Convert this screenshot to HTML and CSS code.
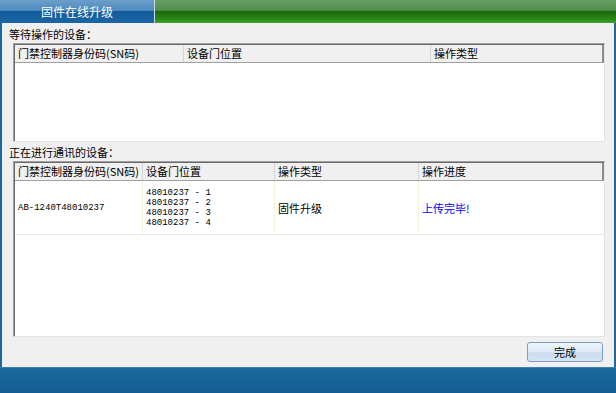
FILE: index.html
```html
<!DOCTYPE html>
<html lang="zh-CN">

<head>
  <meta charset="UTF-8" />
  <title>固件在线升级</title>
  <link rel="stylesheet" href="styles.css">
</head>

<body>
  <div class="window">
    <div class="titlebar">
      <div class="tab">固件在线升级</div>
      <div class="fill"></div>
    </div>

    <div class="main">
      <div class="label first">等待操作的设备：</div>
      <div class="list waiting">
        <div class="head cols-a">
          <div class="th">门禁控制器身份码(SN码)</div>
          <div class="th">设备门位置</div>
          <div class="th">操作类型</div>
        </div>
      </div>

      <div class="label">正在进行通讯的设备：</div>
      <div class="list running">
        <div class="head cols-b">
          <div class="th">门禁控制器身份码(SN码)</div>
          <div class="th">设备门位置</div>
          <div class="th">操作类型</div>
          <div class="th">操作进度</div>
        </div>
        <div class="row cols-b">
          <div class="td mono">AB-1240T48010237</div>
          <div class="td mono doors">
            <span>48010237 - 1</span>
            <span>48010237 - 2</span>
            <span>48010237 - 3</span>
            <span>48010237 - 4</span>
          </div>
          <div class="td">固件升级</div>
          <div class="td done">上传完毕!</div>
        </div>
      </div>

      <div class="btn-row">
        <button class="btn">完成</button>
      </div>
    </div>

    <div class="statusbar"></div>
  </div>
</body>

</html>
```

FILE: styles.css
```css
* {
  box-sizing: border-box;
}

body {
  margin: 0;
  font-family: "Noto Sans CJK SC", "Liberation Sans", sans-serif;
  font-size: 11px;
  color: #000;
  background: #f0f0f0;
}

.window {
  width: 616px;
  height: 393px;
  display: flex;
  flex-direction: column;
}

/* title bar */
.titlebar {
  height: 23px;
  display: flex;
}

.tab {
  width: 155px;
  border-right: 1px solid #c9dbe9;
  background: linear-gradient(#6b9fcb 0%, #4e8bbf 45%, #135c9b 50%, #1a66a4 100%);
  color: #fff;
  font-size: 12px;
  line-height: 23px;
  text-align: center;
}

.fill {
  flex: 1;
  background: linear-gradient(#6a9f68 0%, #4f8e4c 45%, #1b6a0e 50%, #2b8a18 85%, #46a12e 100%);
}

/* main panel */
.main {
  flex: 1;
  border-left: 2px solid #1b67a2;
  border-right: 2px solid #1b67a2;
  padding: 0 9px 0 7px;
  display: flex;
  flex-direction: column;
}

.label {
  padding-top: 2px;
  line-height: 17px;
}

.label.first {
  padding-top: 3px;
}

.list {
  margin-left: 4px;
  background: #fff;
  border-top: 1px solid #a0a0a0;
  border-left: 1px solid #a0a0a0;
  border-right: 1px solid #e3e3e3;
  border-bottom: 1px solid #e3e3e3;
  box-shadow: inset 1px 1px 0 #696969;
}

.waiting {
  height: 99px;
}

.running {
  height: 176px;
}

.head {
  display: grid;
  height: 18px;
  margin: 1px 0 0 1px;
  background: #f0f0f0;
  border-bottom: 1px solid #a0a0a0;
  border-right: 2px solid #8c8c8c;
}

.cols-a {
  grid-template-columns: 169px 247px 1fr;
}

.cols-b {
  grid-template-columns: 128px 132px 144px 1fr;
}

.th {
  padding-left: 3px;
  line-height: 17px;
  border-right: 1px solid #d5d5d5;
  white-space: nowrap;
  overflow: hidden;
}

.th:last-child {
  border-right: 0;
}

.row {
  display: grid;
  height: 54px;
  margin-left: 1px;
  border-bottom: 1px solid #e8e8e8;
}

.td {
  display: flex;
  align-items: center;
  padding-left: 3px;
  border-right: 1px solid #f3f0dc;
}

.td:last-child {
  border-right: 0;
}

.mono {
  font-family: "Liberation Mono", monospace;
  font-size: 9px;
}

.doors {
  flex-direction: column;
  align-items: flex-start;
  justify-content: center;
  line-height: 10px;
}

.done {
  color: #0000ff;
}

.btn-row {
  display: flex;
  justify-content: flex-end;
  margin-top: 5px;
}

.btn {
  width: 76px;
  height: 20px;
  margin-right: 2px;
  padding: 0;
  font-family: inherit;
  font-size: 11px;
  color: #000;
  border: 1px solid #7b9ebf;
  border-radius: 3px;
  background: linear-gradient(#eef5fc 0%, #dde9f6 50%, #c9dcf0 55%, #d4e4f4 100%);
}

/* bottom bar */
.statusbar {
  height: 26px;
  border-top: 1px solid #3d7fb0;
  background: linear-gradient(#1c6a9e, #125c90);
}
```
